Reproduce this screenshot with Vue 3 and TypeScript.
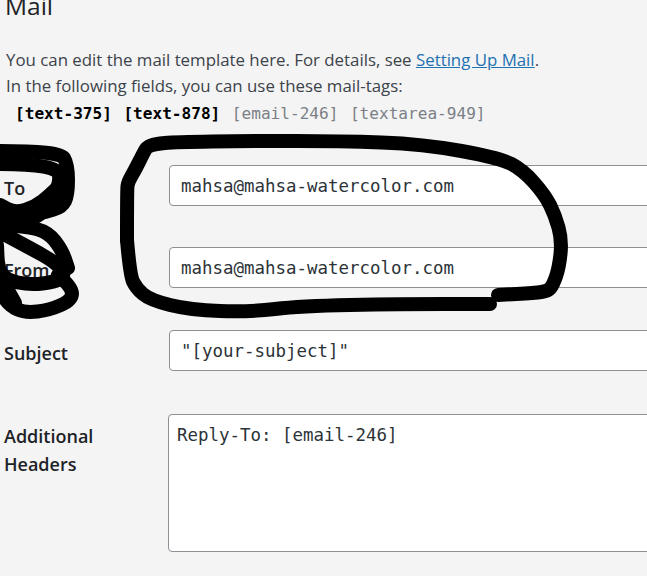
<script setup lang="ts">
interface IField {
  label: string;
  value: string;
}

type Point = [number, number];

const tags = [
  { name: '[text-375]', used: true },
  { name: '[text-878]', used: true },
  { name: '[email-246]', used: false },
  { name: '[textarea-949]', used: false },
];

const fields: IField[] = [
  { label: 'To', value: 'mahsa@mahsa-watercolor.com' },
  { label: 'From', value: 'mahsa@mahsa-watercolor.com' },
  { label: 'Subject', value: '"[your-subject]"' },
];

const strokes: Point[][] = [
  // loop round the two mail fields, upper part
  [[127, 240], [127, 190], [128, 182], [135, 170], [144, 152], [147, 147], [155, 144], [175, 142], [250, 141], [340, 141], [423, 144], [500, 158], [523, 170], [545, 195], [555, 215], [562, 240], [559, 268], [553, 285], [548, 291], [535, 293], [498, 295]],
  // lower part, the marker was put down again at the step
  [[127, 240], [130, 275], [136, 288], [150, 300], [190, 310], [250, 312], [300, 306], [400, 304], [490, 304]],
  // crossing-out on the left
  [[0, 151], [60, 151], [68, 165], [68, 195], [62, 207], [45, 212]],
  [[0, 164], [58, 164], [60, 185], [50, 195], [35, 207], [15, 213], [0, 205]],
  [[58, 200], [40, 215], [25, 222], [10, 215], [0, 212]],
  [[0, 225], [25, 226], [48, 232], [62, 250], [68, 268]],
  [[0, 232], [30, 248], [55, 262], [66, 275], [55, 282], [30, 285], [6, 280], [-2, 268], [-3, 245]],
  [[58, 275], [72, 287], [72, 300], [50, 310], [25, 313], [10, 306], [0, 292]],
  [[5, 285], [15, 303]],
];

// rounds the hand-drawn corners, same as a marker would
const toPath = (points: Point[]) => {
  let d = `M${points[0][0]} ${points[0][1]}`;
  for (let i = 1; i < points.length - 1; i++) {
    const midX = (points[i][0] + points[i + 1][0]) / 2;
    const midY = (points[i][1] + points[i + 1][1]) / 2;
    d += ` Q${points[i][0]} ${points[i][1]} ${midX} ${midY}`;
  }
  const last = points[points.length - 1];
  return `${d} L${last[0]} ${last[1]}`;
};

const scribbles = strokes.map(toPath);
</script>

<template>
  <div class="page">
    <h2 class="title">Mail</h2>
    <p class="intro">
      You can edit the mail template here. For details, see
      <a href="#" class="link">Setting Up Mail</a>.<br>
      In the following fields, you can use these mail-tags:
    </p>
    <p class="tags">
      <span v-for="tag in tags" :key="tag.name" class="tag" :class="{ used: tag.used }">{{ tag.name }}</span>
    </p>

    <div class="form">
      <div v-for="field in fields" :key="field.label" class="row">
        <label class="label">{{ field.label }}</label>
        <input class="input" type="text" :value="field.value">
      </div>
      <div class="row row-area">
        <label class="label">Additional Headers</label>
        <textarea class="area" value="Reply-To: [email-246]"></textarea>
      </div>
    </div>

    <svg class="marker" width="647" height="576" viewBox="0 0 647 576" fill="none">
      <path
        v-for="(d, index) in scribbles"
        :key="index"
        :d="d"
        stroke="#000"
        stroke-width="14"
        stroke-linecap="round"
        stroke-linejoin="round"
      />
    </svg>
  </div>
</template>

<style scoped>
.page {
  position: relative;
  width: 647px;
  height: 576px;
  overflow: hidden;
  background: #f4f4f4;
  color: #3c434a;
  font-family: "Open Sans", "Noto Sans", sans-serif;
}
.title {
  margin: -10px 0 0 5px;
  font-size: 24.5px;
  line-height: 32px;
  font-weight: 400;
  color: #1d2327;
}
.intro {
  margin: 25px 0 0 6px;
  font-size: 16.84px;
  line-height: 26px;
}
.link {
  color: #2271b1;
}
.tags {
  display: flex;
  gap: 11.5px;
  margin: 3px 0 0 15px;
  font-family: "DejaVu Sans Mono", monospace;
  font-size: 16.1px;
  line-height: 24px;
  color: #7b8087;
}
.tag.used {
  color: #000;
  font-weight: 700;
}
.form {
  display: flex;
  flex-direction: column;
  gap: 41px;
  margin-top: 39px;
}
.row {
  display: flex;
  align-items: center;
  height: 41px;
}
.row:nth-child(3) {
  margin-top: 1px;
}
.row-area {
  align-items: flex-start;
  height: 138px;
  margin-top: 2px;
}
.label {
  width: 169px;
  flex: none;
  padding-top: 4px;
  padding-left: 4px;
  box-sizing: border-box;
  font-size: 18px;
  font-weight: 600;
  line-height: 28px;
  color: #1d2327;
}
.row-area .label {
  width: 168px;
  padding-top: 8px;
  padding-right: 60px;
}
.input,
.area {
  flex: none;
  box-sizing: border-box;
  width: 560px;
  margin: 0;
  background: #fff;
  border: 1px solid #8c8f94;
  border-radius: 4px;
  color: #2c3338;
  font-family: "DejaVu Sans Mono", monospace;
  font-size: 17.44px;
  outline: none;
}
.input {
  height: 41px;
  padding: 0 11px;
}
.area {
  height: 138px;
  padding: 8px;
  line-height: 24px;
  resize: none;
}
.marker {
  position: absolute;
  top: 0;
  left: 0;
  pointer-events: none;
}
</style>
